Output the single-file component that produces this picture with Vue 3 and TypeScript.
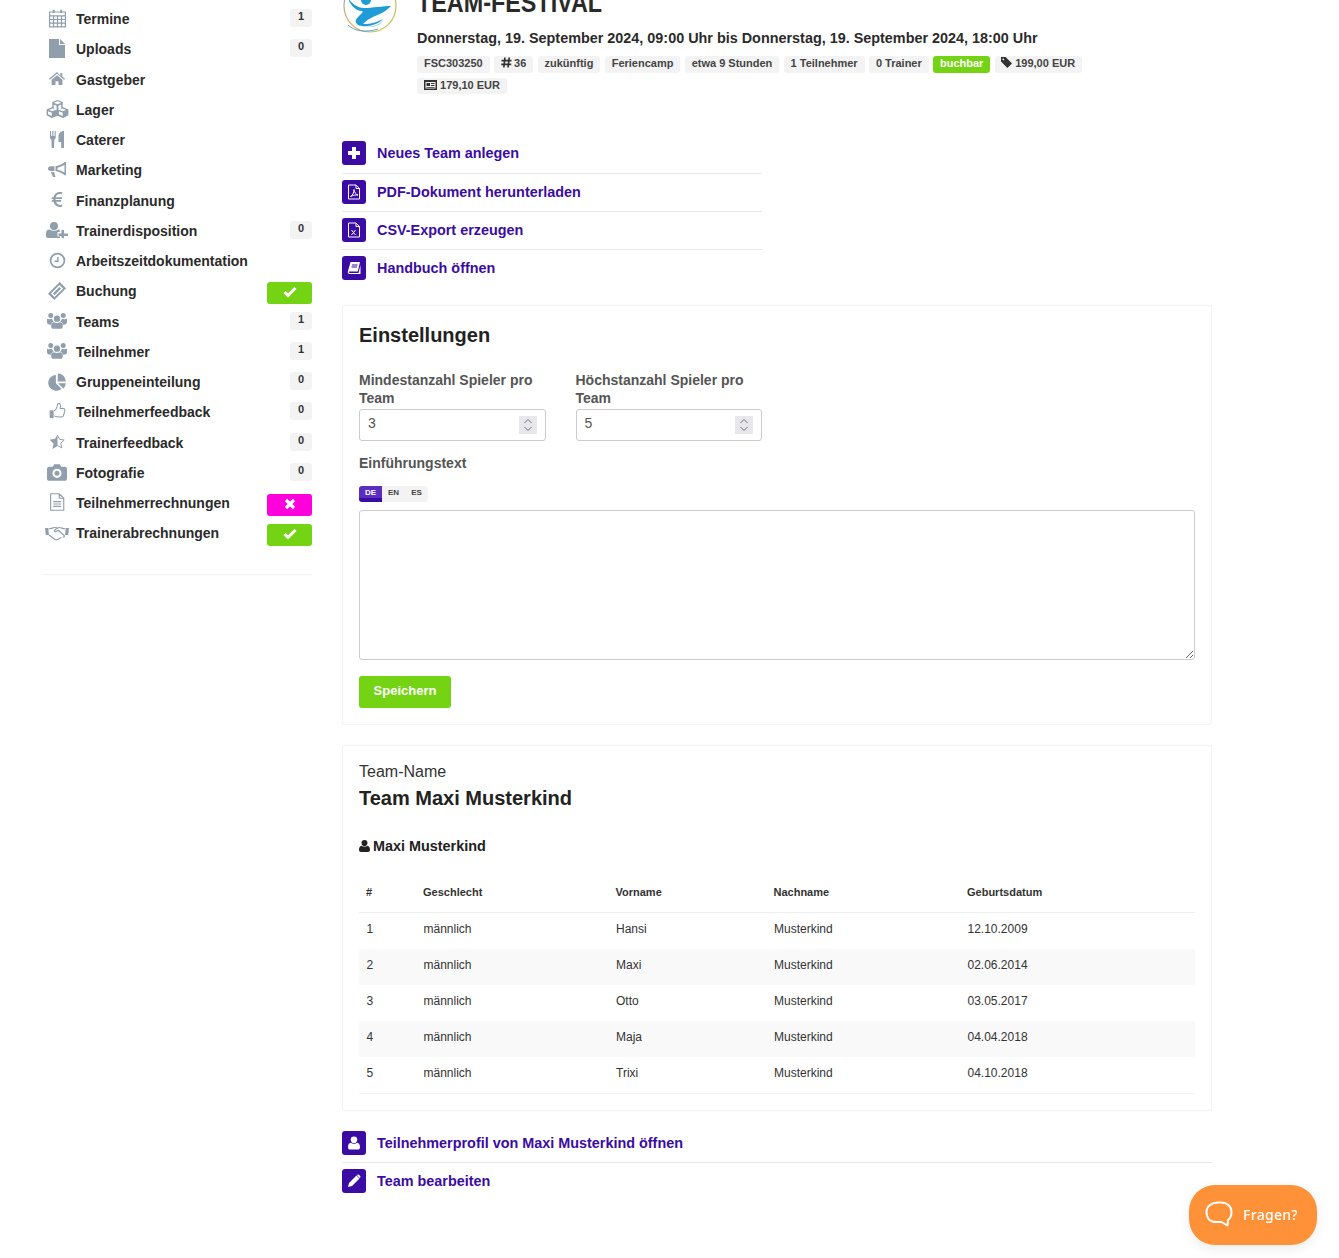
<script setup lang="ts">
interface Ico { f?: string; s?: string; vb?: string }
const icons: Record<string, Ico> = {
  calendar: { f: 'M6 1h2.500v4H6zM15.500 1H18v4h-2.500z', s: 'M2 3.800h20v18.700H2zM2 8.800h20M7 8.800v13.700M12 8.800v13.700M17 8.800v13.700M2 13.300h20M2 17.800h20' },
  file: { vb: '0 0 16 19', f: 'M0 0h10v6h6v13H0zM11 0l5 5h-5z' },
  home: { vb: '0 0 16 13', f: 'M8 0 0 6.700l.9 1L8 1.800l7.100 5.900.9-1-2.700-2.300V.9h-2v2.800zM8 3.300 2.600 7.800V13h3.900V9.300h3V13h3.900V7.800z' },
  cubes: { vb: '0 0 24 19', f: 'M12 0l5.500 2.200v5.300L23.500 10v6L18 19l-6-2.500L6 19l-5.500-3v-6l6-2.500V2.200zM8 2.900l4 1.600 4-1.600-4-1.500zM3 10.500l3.500 1.500 3.500-1.500-3.500-1.400zM14 10.500l3.500 1.500 3.500-1.500-3.500-1.400zM8 9.500l3 1.200V6L8 4.800zM13 10.700l3-1.200V4.800L13 6zM2 15l4 2v-3.500l-4-1.700zM13.500 15l4 2v-3.500l-4-1.700z' },
  cutlery: { vb: '0 0 14 17', f: 'M0 0h1.100v5h1.200V0h1.100v5h1.200V0h1.100v6.500c0 1-.6 1.700-1.400 2L4 17H1.700l-.3-8.500C.6 8.200 0 7.500 0 6.500zM8.500 5.500C8.500 2.500 10.500 0 14 0v17h-2.800v-6H8.500z' },
  bullhorn: { vb: '0 0 19 15', f: 'M18 0v13l-1 .4C14 11 10.500 9.300 7.500 9V4.200c3-.3 6.500-2 9.500-4.200zM16.500 2.800c-2.200 1.500-4.500 2.400-7 2.900v2c2.500.5 4.800 1.400 7 2.900zM6.500 4.200V9H2.500C1 9 0 8 0 6.600s1-2.400 2.500-2.400zM2.800 10h3.200l1.500 5H5z' },
  euro: { vb: '0 0 12 15', f: 'M9 0C5.500 0 3.200 2 2.500 5.200H1L.5 7h1.800v1H1L.5 9.800h2C3.300 13 5.500 15 9 15c1 0 1.800-.2 2.400-.4l-.4-2c-.6.2-1.200.3-1.900.3-2 0-3.300-1.100-4-3.100H10l.4-1.800H4.500v-1h6.300l.4-1.800H4.800C5.400 3.200 6.800 2.100 9 2.100c.7 0 1.300.1 1.800.3l.6-2C10.700.2 10 0 9 0z' },
  userplus: { vb: '0 0 22 16', f: 'M8 0a4 4 0 1 1 0 8 4 4 0 0 1 0-8zM0 14v-2.500C0 9 1.200 7.500 3.500 7.500c2.800 1.700 6.200 1.700 9 0 .4 0 .8.100 1.200.2V10H11.500v4.500H14V16H2c-1.200 0-2-.8-2-2zM15.500 8H18v3.500h4V14h-4v2h-2.500v-2H12.500v-2.500h3z' },
  clock: { f: 'M12 1a11 11 0 1 1 0 22 11 11 0 0 1 0-22zm0 2.500a8.500 8.500 0 1 0 0 17 8.500 8.500 0 0 0 0-17zM13.500 7v7H8v-2h3.500V7z' },
  ticket: { f: 'M15.600 0 24 8.400 8.400 24 0 15.600zM15.190 3.870 3.870 15.190 8.810 20.130 20.130 8.810zM15.200 6.500 17.500 8.800 8.800 17.500 6.500 15.200z' },
  users: { vb: '0 0 24 20', f: 'M12 4a3.800 3.800 0 1 1 0 7.600A3.800 3.800 0 0 1 12 4zM4.500 1a3 3 0 1 1 0 6 3 3 0 0 1 0-6zM19.500 1a3 3 0 1 1 0 6 3 3 0 0 1 0-6zM0 8c1.500.6 3.500.8 6 0 .4 1.500 1.200 2.600 2.200 3.200-2 .6-3 2-3.300 3.800C1.500 15 0 14 0 12zM24 8c-1.500.6-3.500.8-6 0-.4 1.500-1.200 2.600-2.200 3.200 2 .6 3 2 3.300 3.800 3.400 0 4.900-1 4.900-3zM8 12c2.300 1.200 5.700 1.200 8 0 2 .5 3 2 3 4.500 0 2.300-1.300 3.500-3 3.500H8c-1.700 0-3-1.200-3-3.500C5 14 6 12.500 8 12z' },
  pie: { f: 'M10.500 2.500v11l7.500 7.500A10.600 10.600 0 1 1 10.500 2.500zM13 0.500A10.800 10.800 0 0 1 23.800 11.300H13zM13.300 13.500H23.800a10.500 10.500 0 0 1-3.300 7z' },
  thumb: { f: 'M1 11h5.500v11H1z', s: 'M7 11.500c2.200-.6 3.800-3 4.300-5.500.3-2 .8-4.800 2.500-4.800 2.300 0 3 3 2 7.300h4.500c1.700 0 2.400 1.400 1.800 2.800.5 1.300.2 2.300-.6 3 .4 1.300 0 2.400-1 3 .2 1.700-.6 3-2.500 3-3 .2-7 .2-10.500-1.300' },
  starhalf: { f: 'M12 .5v17.500L4.500 22.500l1.700-8.300L0 8.500 8.400 7.300z', s: 'M12 2 15.200 8l6.800 1-5 4.800 1.300 6.900-6.300-3.300' },
  camera: { vb: '0 0 24 20', f: 'M8.500 0h7L17 3h4.500C23 3 24 4.200 24 5.700V17.200c0 1.600-1 2.800-2.500 2.800h-19C1 20 0 18.800 0 17.200V5.700C0 4.200 1 3 2.500 3H7zM12 5.500a5.500 5.500 0 1 0 0 11 5.500 5.500 0 0 0 0-11zM12 8a3 3 0 1 1 0 6 3 3 0 0 1 0-6z' },
  filetext: { s: 'M3.500 1h11.500L21 7v16H3.500zM15 1v6h6M7 11.500h10.500M7 14.700h10.500M7 17.900h10.500' },
  handshake: { vb: '0 0 30 18', f: 'M0 2h4l1 9H1zM30 2h-4l-1 9h4z', s: 'M4.500 3c3 .5 5-1.500 8-1.500 1.500 0 2.500.5 3.500 1.500M25.500 3c-3 .5-5-1.500-8-1.500-1.500 0-3.500 1-5.500 3.500-1 1.300.5 2.500 2 1.500l2.500-1.500 7.500 6.500c1 1.200-.5 2.500-1.700 1.500M5 11l7.500 5.500c1.200.8 2 .5 3 0l5-2.500' },
}
type Stat = 'ok' | 'no'
interface Row { icon: string; label: string; badge?: string; status?: Stat }
const nav: Row[] = [
  { icon: 'calendar', label: 'Termine', badge: '1' },
  { icon: 'file', label: 'Uploads', badge: '0' },
  { icon: 'home', label: 'Gastgeber' },
  { icon: 'cubes', label: 'Lager' },
  { icon: 'cutlery', label: 'Caterer' },
  { icon: 'bullhorn', label: 'Marketing' },
  { icon: 'euro', label: 'Finanzplanung' },
  { icon: 'userplus', label: 'Trainerdisposition', badge: '0' },
  { icon: 'clock', label: 'Arbeitszeitdokumentation' },
  { icon: 'ticket', label: 'Buchung', status: 'ok' },
  { icon: 'users', label: 'Teams', badge: '1' },
  { icon: 'users', label: 'Teilnehmer', badge: '1' },
  { icon: 'pie', label: 'Gruppeneinteilung', badge: '0' },
  { icon: 'thumb', label: 'Teilnehmerfeedback', badge: '0' },
  { icon: 'starhalf', label: 'Trainerfeedback', badge: '0' },
  { icon: 'camera', label: 'Fotografie', badge: '0' },
  { icon: 'filetext', label: 'Teilnehmerrechnungen', status: 'no' },
  { icon: 'handshake', label: 'Trainerabrechnungen', status: 'ok' },
]
const plainTags = ['zukünftig', 'Feriencamp', 'etwa 9 Stunden', '1 Teilnehmer', '0 Trainer']
const players = [
  ['1', 'männlich', 'Hansi', 'Musterkind', '12.10.2009'],
  ['2', 'männlich', 'Maxi', 'Musterkind', '02.06.2014'],
  ['3', 'männlich', 'Otto', 'Musterkind', '03.05.2017'],
  ['4', 'männlich', 'Maja', 'Musterkind', '04.04.2018'],
  ['5', 'männlich', 'Trixi', 'Musterkind', '04.10.2018'],
]
const heads = ['#', 'Geschlecht', 'Vorname', 'Nachname', 'Geburtsdatum']
</script>

<template>
  <div class="page">
    <aside class="side">
      <div v-for="r in nav" :key="r.label" class="row">
        <span class="ico">
          <svg :class="['navsvg', r.icon]" :viewBox="icons[r.icon].vb || '0 0 24 24'">
            <path v-if="icons[r.icon].f" :d="icons[r.icon].f" fill="currentColor" fill-rule="evenodd" />
            <path v-if="icons[r.icon].s" :d="icons[r.icon].s" fill="none" stroke="currentColor" stroke-width="1.500" />
          </svg>
        </span>
        <span class="lbl">{{ r.label }}</span>
        <span v-if="r.badge" class="badge">{{ r.badge }}</span>
        <span v-if="r.status" :class="['stat', r.status]">
          <svg v-if="r.status === 'ok'" width="14" height="12" viewBox="0 0 14 12"><path d="M1.500 6 5 9.500 12.500 2" fill="none" stroke="#fff" stroke-width="3" /></svg>
          <svg v-else width="12" height="12" viewBox="0 0 12 12"><path d="M2 2l8 8M10 2l-8 8" fill="none" stroke="#fff" stroke-width="3.200" /></svg>
        </span>
      </div>
      <div class="side-rule"></div>
    </aside>

    <main class="main">
      <header class="head">
        <svg class="logo" width="54" height="54" viewBox="0 0 54 54">
          <defs>
            <linearGradient id="ring" x1="0" y1="0" x2="1" y2="1">
              <stop offset="0" stop-color="#5fb4e0" />
              <stop offset=".5" stop-color="#f5a94a" />
              <stop offset="1" stop-color="#a8cf5a" />
            </linearGradient>
          </defs>
          <circle cx="27" cy="27" r="26" fill="#fff" stroke="url(#ring)" stroke-width="1.200" />
          <path d="M5 46c6 6 18 8 30 4" fill="none" stroke="#2b8fd0" stroke-width=".8" />
          <circle cx="23" cy="21" r="5" fill="#1f9bd8" />
          <path d="M5 19c4 6 10 10 16 10 8 0 19-2 27-2-5 6-14 9-20 12-4 2-6 4-8 6 9 0 14-2 20-5-4 5-14 8-21 7-7-1-8-5-4-9 4-4 6-5 4-6-6 0-12-6-14-13z" fill="#1f9bd8" />
          <path d="M19 47c7 2 16 0 22-6-3 6-14 9-22 6z" fill="#9fd3ec" />
        </svg>
        <div class="head-text">
          <h1>TEAM-FESTIVAL</h1>
          <p class="date">Donnerstag, 19. September 2024, 09:00 Uhr bis Donnerstag, 19. September 2024, 18:00 Uhr</p>
          <div class="tags">
            <span class="tag">FSC303250</span>
            <span class="tag">
              <svg class="hash" width="11" height="11" viewBox="0 0 11 11"><path d="M4 .5 2.800 10.500M8.200 .5 7 10.500M.5 3.600h10M.2 7.400h10" fill="none" stroke="#333" stroke-width="1.700" /></svg>
              36
            </span>
            <span v-for="t in plainTags" :key="t" class="tag">{{ t }}</span>
            <span class="tag green">buchbar</span>
            <span class="tag price">
              <svg width="11" height="11" viewBox="0 0 12 12"><path d="M0 0h5l7 7-5 5-7-7zM2.500 1.500a1 1 0 1 0 0 2 1 1 0 0 0 0-2z" fill="#333" fill-rule="evenodd" /></svg>
              199,00 EUR
            </span>
            <span class="tag">
              <svg width="13" height="10" viewBox="0 0 13 10"><path d="M0 0h13v10H0zM1.500 2v6.500h10V2zM2.500 3h3.500v3H2.500zM7 3h3.500v1H7zM7 5h3.500v1H7zM2.500 7h8v.8h-8z" fill="#333" fill-rule="evenodd" /></svg>
              179,10 EUR
            </span>
          </div>
        </div>
      </header>

      <nav class="actions top-actions">
        <a class="act">
          <span class="sq"><svg width="14" height="14" viewBox="0 0 14 14"><path d="M5 1h4v4h4v4H9v4H5V9H1V5h4z" fill="#fff" /></svg></span>
          Neues Team anlegen
        </a>
        <a class="act">
          <span class="sq"><svg width="14" height="16" viewBox="0 0 14 16"><path d="M1.500 1h7.500l3.500 3.500V15h-11zM9 1v3.500h3.500M3.500 12.500c2-1 3.500-4 3.500-7 .3 3 2 5 4 5.500-2.500-.3-5 .3-7.500 1.500z" fill="none" stroke="#fff" stroke-width="1" /></svg></span>
          PDF-Dokument herunterladen
        </a>
        <a class="act">
          <span class="sq"><svg width="14" height="16" viewBox="0 0 14 16"><path d="M1.500 1h7.500l3.500 3.500V15h-11zM9 1v3.500h3.500M4.500 8l4 5M8.500 8l-4 5" fill="none" stroke="#fff" stroke-width="1" /></svg></span>
          CSV-Export erzeugen
        </a>
        <a class="act">
          <span class="sq"><svg width="14" height="14" viewBox="0 0 14 14"><path d="M3.500 1H13l-2.200 9.500H2.500c-.5 0-.8.600-.5 1 .2.300.5.500 1 .5h8.500l2-8v9H2.500C1 13 .5 11.500 1 10zM5 3.500v1h5.500v-1zM4.500 5.500v1H10v-1z" fill="#fff" fill-rule="evenodd" /></svg></span>
          Handbuch öffnen
        </a>
      </nav>

      <section class="card settings">
        <h2>Einstellungen</h2>
        <div class="fields">
          <label class="field">
            <span class="flabel">Mindestanzahl Spieler pro Team</span>
            <span class="numwrap">
              <input class="num" type="text" value="3" readonly />
              <span class="spin"><svg width="10" height="14" viewBox="0 0 10 14"><path d="M1.500 5 5 1.500 8.500 5M1.500 9 5 12.500 8.500 9" fill="none" stroke="#6d6d75" stroke-width="1" /></svg></span>
            </span>
          </label>
          <label class="field">
            <span class="flabel">Höchstanzahl Spieler pro Team</span>
            <span class="numwrap">
              <input class="num" type="text" value="5" readonly />
              <span class="spin"><svg width="10" height="14" viewBox="0 0 10 14"><path d="M1.500 5 5 1.500 8.500 5M1.500 9 5 12.500 8.500 9" fill="none" stroke="#6d6d75" stroke-width="1" /></svg></span>
            </span>
          </label>
        </div>
        <div class="flabel intro">Einführungstext</div>
        <div class="langs">
          <span class="lang on">DE</span><span class="lang">EN</span><span class="lang">ES</span>
        </div>
        <textarea class="area"></textarea>
        <button class="save" type="button">Speichern</button>
      </section>

      <section class="card team">
        <div class="tn">Team-Name</div>
        <h2 class="tname">Team Maxi Musterkind</h2>
        <h3 class="pers">
          <svg width="11" height="12" viewBox="0 0 11 12"><path d="M5.500 0a3 3 0 0 1 3 3c0 1.700-1.300 3.300-3 3.300S2.500 4.700 2.500 3a3 3 0 0 1 3-3zM2.500 5.800c1.700 1.400 4.300 1.400 6 0 1.500.3 2.500 1.700 2.500 4 0 1.400-.8 2.200-2 2.200H2c-1.200 0-2-.8-2-2.200 0-2.300 1-3.700 2.500-4z" fill="#222" /></svg>
          Maxi Musterkind
        </h3>
        <table class="tbl">
          <colgroup><col class="c1" /><col class="c2" /><col class="c3" /><col class="c4" /><col /></colgroup>
          <thead><tr><th v-for="h in heads" :key="h">{{ h }}</th></tr></thead>
          <tbody>
            <tr v-for="p in players" :key="p[0]"><td v-for="(c, i) in p" :key="i">{{ c }}</td></tr>
          </tbody>
        </table>
      </section>

      <nav class="actions bottom-actions">
        <a class="act">
          <span class="sq"><svg width="12" height="14" viewBox="0 0 11 12"><path d="M5.500 0a3 3 0 0 1 3 3c0 1.700-1.300 3.300-3 3.300S2.500 4.700 2.500 3a3 3 0 0 1 3-3zM2.500 5.800c1.700 1.400 4.300 1.400 6 0 1.500.3 2.500 1.700 2.500 4 0 1.400-.8 2.200-2 2.200H2c-1.200 0-2-.8-2-2.200 0-2.300 1-3.700 2.500-4z" fill="#fff" /></svg></span>
          Teilnehmerprofil von Maxi Musterkind öffnen
        </a>
        <a class="act">
          <span class="sq"><svg width="14" height="14" viewBox="0 0 14 14"><path d="M9.500 1.500 12.500 4.500 5 12 1 13l1-4zM10.500 .8c.4-.4 1-.4 1.400 0l1.300 1.300c.4.4.4 1 0 1.400l-.5.5-2.700-2.700z" fill="#fff" /></svg></span>
          Team bearbeiten
        </a>
      </nav>
    </main>

    <button class="help" type="button">
      <svg width="28" height="26" viewBox="0 0 28 26"><path d="M13 1.500h3c6 0 10.500 3.500 10.500 9.500 0 4-1.500 6.500-3.500 8l-.5 5.500-6-3.500H11c-6 0-9.500-4-9.500-10S7 1.500 13 1.500z" fill="none" stroke="#fff" stroke-width="2" stroke-linejoin="round" /></svg>
      <span>Fragen?</span>
    </button>
  </div>
</template>

<style>
html, body { margin: 0; background: #fff; }
</style>

<style scoped>
.page {
  display: flex;
  gap: 30px;
  padding-left: 42px;
  height: 1258px;
  overflow: hidden;
  box-sizing: border-box;
  font-family: "Liberation Sans", Arial, sans-serif;
  font-size: 14px;
  color: #2b2a2a;
  position: relative;
}
.side { width: 270px; flex: none; padding-top: 4px; }
.row { display: flex; align-items: center; height: 30.25px; }
.ico { width: 30px; flex: none; display: flex; justify-content: center; margin-right: 4px; color: #919eab; }
.navsvg { width: 20px; height: 20px; display: block; }
.navsvg.calendar { width: 19px; height: 19px; margin-top: -1px; }
.navsvg.file { width: 16px; height: 19px; margin-top: -2px; }
.navsvg.home { width: 16px; height: 13px; margin-top: -2px; }
.navsvg.cubes { width: 23px; height: 18px; margin-top: -2px; }
.navsvg.cutlery { width: 14px; height: 17px; margin-top: -2px; }
.navsvg.bullhorn { width: 19px; height: 15px; margin-top: -1px; }
.navsvg.euro { width: 12px; height: 15px; margin-top: -3px; }
.navsvg.userplus { width: 22px; height: 16px; margin-top: -2px; }
.navsvg.clock { width: 17px; height: 17px; margin-top: -1px; }
.navsvg.ticket { width: 18px; height: 18px; }
.navsvg.users { width: 20px; height: 17px; margin-top: -2px; }
.navsvg.pie { width: 18px; height: 18px; }
.navsvg.thumb { width: 17px; height: 18px; margin-top: -3px; }
.navsvg.starhalf { width: 17px; height: 16px; margin-top: -1px; }
.navsvg.camera { width: 20px; height: 17px; margin-top: -1px; }
.navsvg.filetext { width: 18px; height: 18px; margin-top: -2px; }
.navsvg.handshake { width: 24px; height: 15px; margin-top: 1px; }
.lbl { flex: 1; font-weight: 700; }
.badge {
  width: 22px;
  height: 18px;
  margin-bottom: 2px;
  background: #f3f3f3;
  border-radius: 3px;
  font-size: 11px;
  font-weight: 700;
  line-height: 15px;
  text-align: center;
  color: #333;
}
.stat {
  width: 45px;
  height: 22px;
  margin-top: 4px;
  padding-bottom: 2px;
  box-sizing: border-box;
  border-radius: 3px;
  display: flex;
  align-items: center;
  justify-content: center;
}
.stat.ok { background: #74d414; }
.stat.no { background: #ff00dc; }
.side-rule { border-top: 1px solid #f3f3f3; margin-top: 25px; }

.main { width: 870px; flex: none; }
.head { display: flex; gap: 20px; margin-top: -21px; }
.logo { flex: none; margin-left: 1px; }
.head-text { padding-top: 7px; flex: 1; }
h1 {
  margin: 0;
  font-size: 27px;
  line-height: 34px;
  font-weight: 700;
  transform: scaleX(.865);
  transform-origin: left;
}
.date { margin: 9px 0 0; font-size: 14.4px; font-weight: 700; line-height: 18px; }
.tags { display: flex; flex-wrap: wrap; gap: 5px 4.250px; margin-top: 9px; width: 720px; }
.tag {
  height: 16.500px;
  padding: 0 7px;
  background: #f3f3f3;
  border-radius: 3px;
  font-size: 11px;
  font-weight: 700;
  line-height: 15px;
  color: #444;
  white-space: nowrap;
}
.tag.price { padding: 0 6.500px; }
.tag svg { vertical-align: -1px; }
.tag svg.hash { margin-right: -1px; }
.tag.green { background: #74d414; color: #fff; }
.actions { display: flex; flex-direction: column; }
.top-actions { width: 420px; margin-top: 41.500px; }
.act {
  display: flex;
  align-items: center;
  gap: 11px;
  height: 38.200px;
  padding-bottom: 1.400px;
  box-sizing: border-box;
  border-bottom: 1px solid #e8e8e8;
  color: #3a0ca3;
  font-size: 14.400px;
  font-weight: 700;
  cursor: pointer;
}
.act:last-child { border-bottom-color: transparent; }
.sq {
  width: 24px;
  height: 24px;
  flex: none;
  border-radius: 3px;
  background: #3a0ca3;
  display: flex;
  align-items: center;
  justify-content: center;
}
.card {
  border: 1px solid #f3f3f3;
  border-radius: 3px;
  box-sizing: border-box;
  padding: 0 16px;
}
.settings { height: 420px; margin-top: 16.800px; padding-top: 17px; }
h2 { margin: 0; font-size: 20px; line-height: 24px; font-weight: 700; color: #222; }
.fields { display: flex; gap: 30px; margin-top: 24px; }
.field { width: 186.500px; display: block; }
.flabel { display: block; font-weight: 700; color: #555; line-height: 18px; }
.numwrap { position: relative; display: block; margin-top: 2px; }
.num {
  display: block;
  width: 100%;
  height: 32px;
  box-sizing: border-box;
  padding: 0 8px 4px;
  border: 1px solid #ccc;
  border-radius: 3px;
  font: 14px "Liberation Sans", Arial, sans-serif;
  color: #555;
  outline: none;
}
.spin {
  position: absolute;
  right: 9px;
  top: 7px;
  width: 18px;
  height: 18px;
  background: #e8e8ec;
  display: flex;
  align-items: center;
  justify-content: center;
}
.intro { margin-top: 13px; }
.langs {
  display: flex;
  width: 69px;
  height: 16px;
  margin-top: 14px;
  background: #f3f3f3;
  border-radius: 3px;
  overflow: hidden;
}
.lang { width: 23px; font-size: 8px; font-weight: 700; line-height: 13px; text-align: center; color: #444; }
.lang.on { background: linear-gradient(#5a2fc0 0 75%, #3a0ca3 75%); color: #fff; }
.area {
  display: block;
  width: 100%;
  height: 150px;
  margin-top: 8px;
  box-sizing: border-box;
  border: 1px solid #ccc;
  border-radius: 3px;
  outline: none;
}
.save {
  display: block;
  width: 92px;
  height: 32px;
  margin-top: 16px;
  padding: 0 0 4px;
  border: 0;
  border-radius: 3px;
  background: #74d414;
  color: #fff;
  font: 700 13px "Liberation Sans", Arial, sans-serif;
}
.team { height: 366px; margin-top: 20px; padding-top: 16px; }
.tn { font-size: 16px; line-height: 19px; color: #333; }
.tname { line-height: 24px; margin-top: 5px; }
.pers { margin: 27px 0 0; font-size: 14.400px; line-height: 18px; font-weight: 700; color: #222; }
.pers svg { vertical-align: -1px; margin-right: -1px; }
.tbl { width: 836px; border-collapse: collapse; table-layout: fixed; margin-top: 19px; }
.c1 { width: 57px; }
.c2 { width: 192.500px; }
.c3 { width: 158px; }
.c4 { width: 193.500px; }
th {
  height: 38px;
  padding: 0 7px 2px;
  font-size: 11px;
  font-weight: 700;
  text-align: left;
  color: #333;
  border-bottom: 1px solid #f0f0f0;
  box-sizing: border-box;
}
td {
  height: 36px;
  padding: 0 7.500px 4px;
  font-size: 12px;
  color: #333;
  box-sizing: border-box;
}
tbody tr:first-child td { height: 37px; padding-bottom: 3px; }
tbody tr:nth-child(even) { background: #f9f9f9; }
tbody tr:last-child td { border-bottom: 1px solid #f3f3f3; }
.bottom-actions { margin-top: 14px; }
.help {
  position: fixed;
  left: 1189px;
  top: 1185px;
  width: 128px;
  height: 60px;
  border: 0;
  border-radius: 26px;
  background: #ff9238;
  box-shadow: 0 4px 12px rgba(0,0,0,.08);
  color: #fff;
  font: 500 14px "Noto Sans", sans-serif;
  letter-spacing: .3px;
  display: flex;
  align-items: center;
  gap: 10px;
  padding: 0 0 2px 16px;
}
</style>
